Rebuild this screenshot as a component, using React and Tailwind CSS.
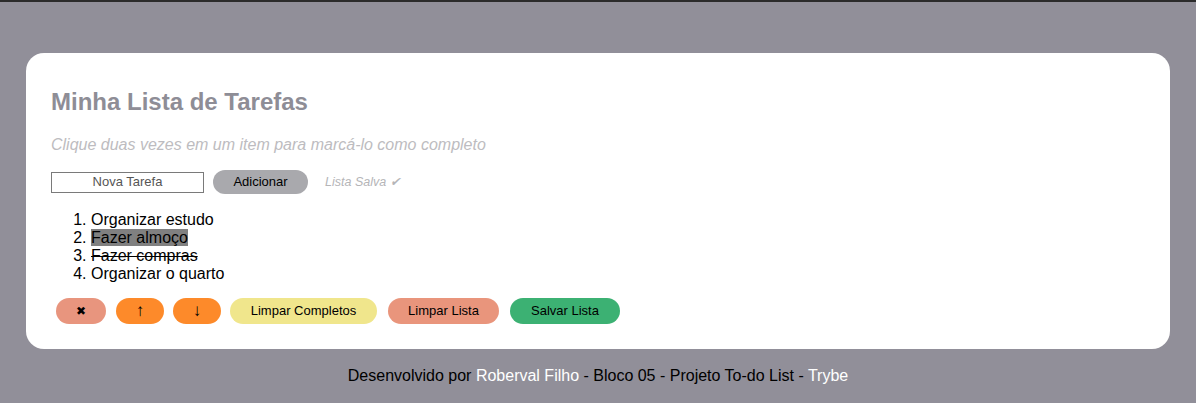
import React from "react";

export default function App() {
  const items = [
    { text: "Organizar estudo" },
    { text: "Fazer almoço", selected: true },
    { text: "Fazer compras", done: true },
    { text: "Organizar o quarto" },
  ];
  return (
    <div
      className="min-h-[403px] bg-[#918f99] border-t-2 border-[#2b2b2b] pt-[51px] px-[26px]"
      style={{ fontFamily: '"Liberation Sans", Arial, sans-serif' }}
    >
      <div className="bg-white rounded-[18px] pl-[25px] pr-[25px] pt-[35px] pb-[25px]">
        <h1 className="text-[24px] leading-[28px] font-bold text-[#8e8d96]">
          Minha Lista de Tarefas
        </h1>
        <p className="mt-[19px] text-[16px] leading-[20px] italic text-[#bdbcc0]">
          Clique duas vezes em um item para marcá-lo como completo
        </p>
        <div className="mt-[15px] flex items-center h-[24px]">
          <div className="w-[153px] h-[21px] border border-[#7a7a7a] flex items-center justify-center text-[13px] text-[#555]">
            Nova Tarefa
          </div>
          <button className="ml-[9px] w-[95px] h-[24px] rounded-full bg-[#a9a9ad] text-[13px] text-black">
            Adicionar
          </button>
          <span className="ml-[17px] text-[12.5px] italic text-[#b5b5b8]">
            Lista Salva ✔
          </span>
        </div>
        <ol className="mt-[17px] list-decimal pl-[40px] text-[16px] leading-[18px] text-black">
          {items.map((it, i) => (
            <li key={i}>
              <span
                className={
                  (it.selected ? "bg-[#808080] " : "") +
                  (it.done ? "line-through" : "")
                }
              >
                {it.text}
              </span>
            </li>
          ))}
        </ol>
        <div className="mt-[15px] flex items-center pl-[5px] text-[13px] text-black">
          <button className="w-[50px] h-[26px] rounded-full bg-[#e8957e] text-[12px]">✖</button>
          <button className="ml-[10px] w-[48px] h-[26px] rounded-full bg-[#fd8a2a] text-[17px] font-light">↑</button>
          <button className="ml-[9px] w-[48px] h-[26px] rounded-full bg-[#fd8a2a] text-[17px] font-light">↓</button>
          <button className="ml-[9px] w-[147px] h-[26px] rounded-full bg-[#f0e68c]">Limpar Completos</button>
          <button className="ml-[11px] w-[111px] h-[26px] rounded-full bg-[#e9957c]">Limpar Lista</button>
          <button className="ml-[11px] w-[110px] h-[26px] rounded-full bg-[#3cb173]">Salvar Lista</button>
        </div>
      </div>
      <footer className="mt-[17px] text-center text-[16px] leading-[20px] text-black">
        Desenvolvido por <span className="text-white">Roberval Filho</span> - Bloco 05 - Projeto To-do List - <span className="text-white">Trybe</span>
      </footer>
    </div>
  );
}
